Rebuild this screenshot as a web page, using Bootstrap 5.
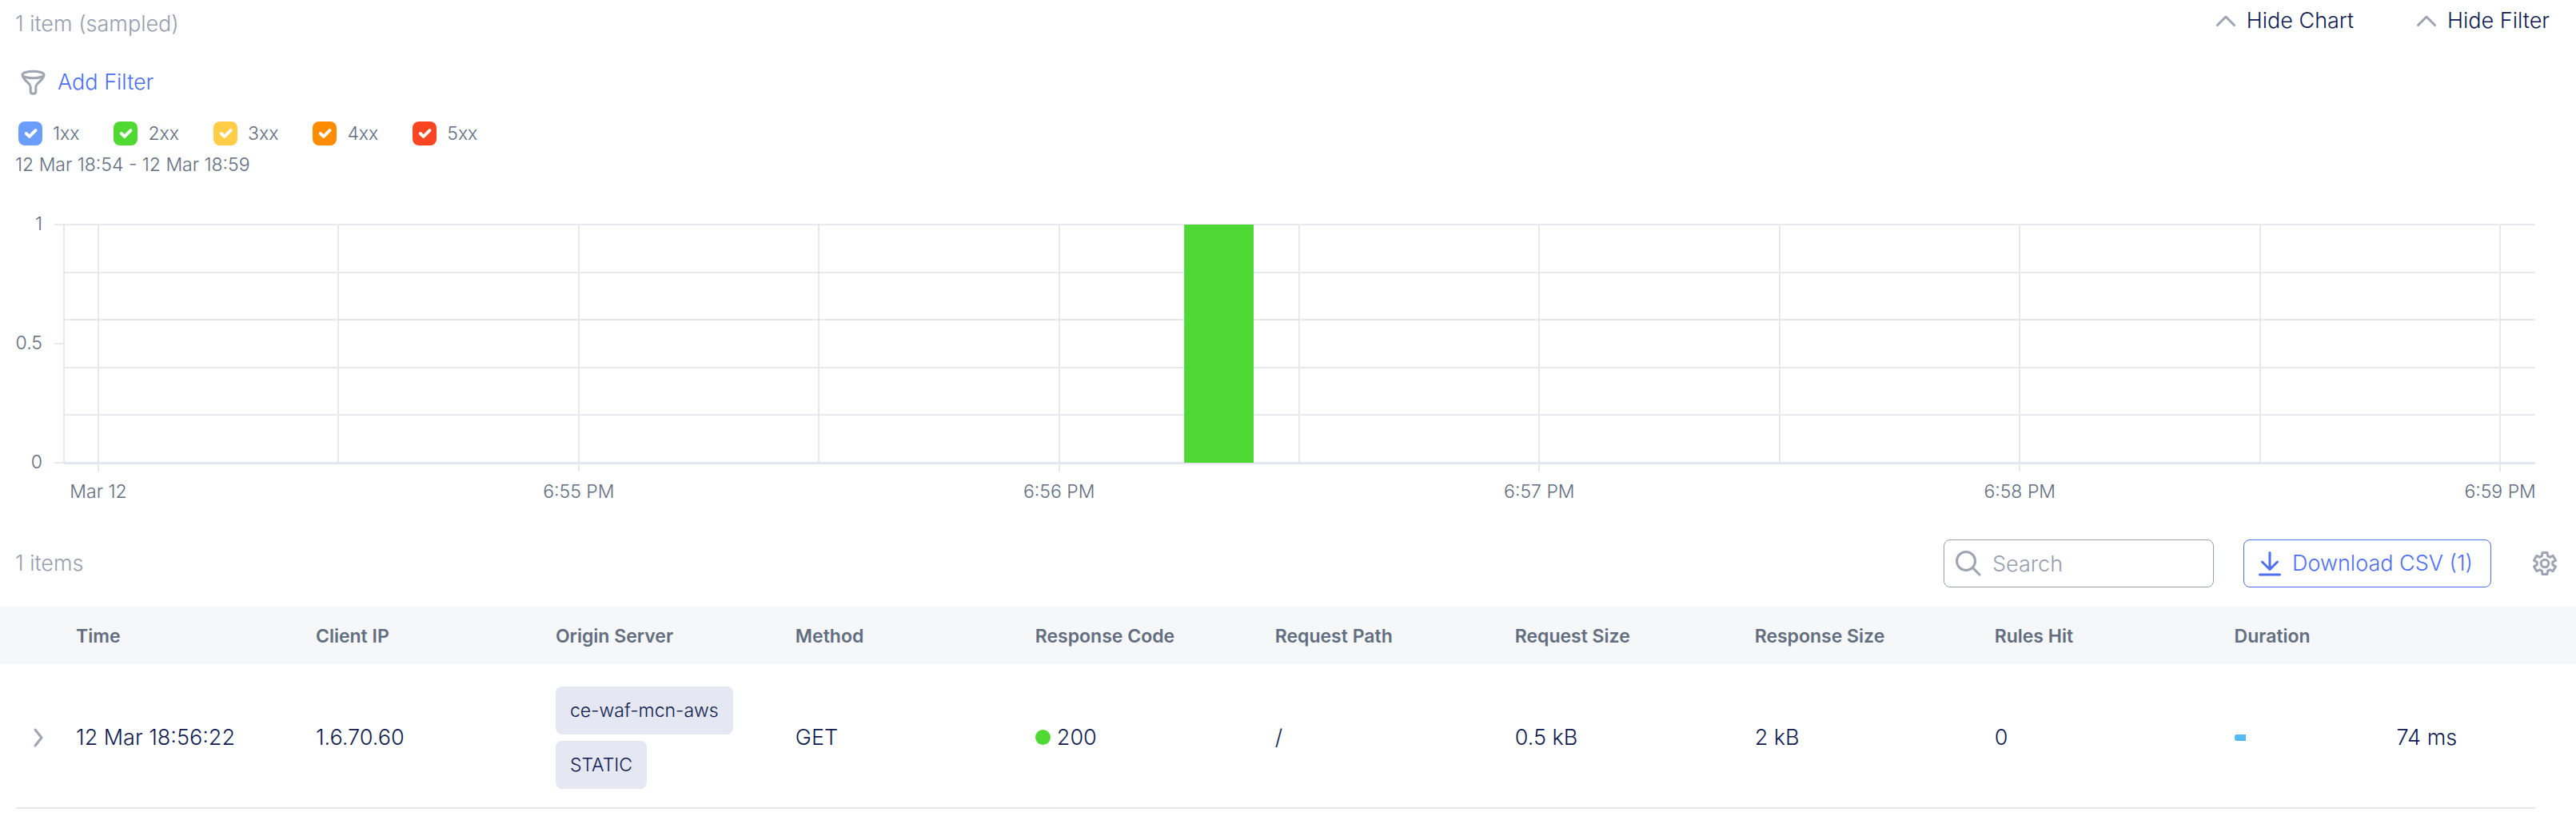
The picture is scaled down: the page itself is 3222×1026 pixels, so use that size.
<!DOCTYPE html>
<html lang="en">
<head>
<meta charset="utf-8">
<meta name="viewport" content="width=device-width, initial-scale=1">
<title>Requests</title>
<link href="https://cdn.jsdelivr.net/npm/bootstrap@5.3.0/dist/css/bootstrap.min.css" rel="stylesheet">
<script src="https://cdn.jsdelivr.net/npm/bootstrap@5.3.0/dist/js/bootstrap.bundle.min.js" defer></script>
<style>
  :root { --ink: #0f1a50; --slate: #626d7f; --mist: #989daf; --brand: #4f6ff2; --line: #e6e7ed; }
  body { font-family: Inter, "Liberation Sans", sans-serif; font-size: 27px; font-weight: 300; color: var(--ink); background: #fff; }
  .btn { --bs-btn-font-size: 27px; --bs-btn-font-weight: 300; --bs-btn-line-height: 40px; }
  .page-head { padding: 10px 33px 0 19px; }
  .count-label { color: var(--mist); line-height: 40px; }
  .toggles { gap: 78px; }
  .toggle-link { --bs-btn-line-height: 32px; --bs-btn-color: var(--ink); gap: 13px; }
  .filter-bar { padding: 33px 20px 0 24px; }
  .add-filter { --bs-btn-color: var(--brand); gap: 14px; }
  .legend-row { padding: 29px 20px 0 23px; gap: 43px; font-size: 23px; color: var(--slate); }
  .legend-item { gap: 13px; line-height: 28px; }
  .legend-item .form-check-input { width: 30px; height: 30px; margin: 0; border: 0; border-radius: 8px; background-size: 26px; background-color: var(--tone); }
  .c1 { --tone: #6b9dff; } .c2 { --tone: #4fd932; } .c3 { --tone: #ffcd47; } .c4 { --tone: #ff8c00; } .c5 { --tone: #fb4522; }
  .range-label { padding: 8px 19px 0; font-size: 23px; line-height: 32px; color: var(--slate); }
  .plot-area { padding: 0 51px 0 80px; }
  .plot-area svg { display: block; width: 100%; height: 409px; overflow: visible; font-size: 23px; }
  .plot-area line { stroke: #e8e9ee; stroke-width: 2; shape-rendering: crispEdges; }
  .plot-area .base-axis { stroke: #e4e5ef; stroke-width: 3; }
  .plot-area text { fill: var(--slate); }
  .toolbar-row { padding: 44px 22px 24px 19px; }
  .search-box { width: 338px; margin-right: 37px; }
  .search-box svg { left: 15px; top: 14px; }
  .search-box .form-control { height: 60px; padding: 0 16px 0 60px; font-size: 27px; font-weight: 300; color: var(--ink); border: 1px solid #989daf; border-radius: 8px; }
  .search-box .form-control::placeholder { color: var(--mist); }
  .csv-btn { --bs-btn-color: var(--brand); --bs-btn-border-color: var(--brand); --bs-btn-border-radius: 8px; padding: 9px 22px 9px 17px; gap: 13px; margin-right: 50px; }
  .log-table { --bs-table-bg: transparent; --bs-table-color: var(--ink); table-layout: fixed; line-height: 40px; }
  .log-table > :not(caption) > * > * { border: 0; padding: 2px 0 0; vertical-align: middle; }
  .log-table thead { background: #f5f7f9; }
  .log-table thead th { height: 72px; font-size: 23px; font-weight: 600; color: var(--slate); }
  .log-table tbody tr { background: linear-gradient(var(--line), var(--line)) 20px 100% / calc(100% - 71px) 2px no-repeat; }
  .log-table tbody td { height: 181px; }
  .col-toggle { width: 95px; }
  .col-data { width: 9.31%; }
  .origin-tag { background: #e5e7f2; border-radius: 8px; padding: 14px 18px; font-size: 23px; line-height: 32px; }
  .status-dot { width: 19px; height: 19px; border-radius: 50%; background: #4fd932; }
  .time-track { width: 203px; height: 8px; }
  .time-fill { height: 8px; background: #55b9f3; border-radius: 3px 0 0 3px; }
</style>
</head>
<body>
<header class="page-head d-flex justify-content-between align-items-start">
  <span class="count-label">1 item (sampled)</span>
  <div class="toggles d-flex">
    <button type="button" class="btn toggle-link d-flex align-items-center border-0 p-0">
      <svg width="26" height="16" viewBox="0 0 26 16" fill="none" stroke="#9fa4b3" stroke-width="3" stroke-linecap="round" stroke-linejoin="round"><path d="M2.500 13.500 13 3l10.500 10.500"/></svg>Hide Chart</button>
    <button type="button" class="btn toggle-link d-flex align-items-center border-0 p-0">
      <svg width="26" height="16" viewBox="0 0 26 16" fill="none" stroke="#9fa4b3" stroke-width="3" stroke-linecap="round" stroke-linejoin="round"><path d="M2.500 13.500 13 3l10.500 10.500"/></svg>Hide Filter</button>
  </div>
</header>

<main>
  <div class="filter-bar d-flex">
    <button type="button" class="btn add-filter d-flex align-items-center border-0 p-0">
      <svg width="34" height="34" viewBox="0 0 34 34" fill="none" stroke="#9fa4b3" stroke-width="3" stroke-linejoin="round"><ellipse cx="17.500" cy="7.500" rx="13.500" ry="4.200"/><path d="M4 8c.2 2.600 1.400 4 3 5.600l5.600 5.600c1.100 1.100 1.600 2.100 1.600 3.800v5.500c0 1.800 1.300 2.700 3.300 2.700s3.300-.9 3.300-2.700V23c0-1.700.5-2.700 1.600-3.800l5.600-5.600c1.600-1.600 2.800-3 3-5.600"/></svg>Add Filter</button>
  </div>

  <div class="legend-row d-flex">
    <label class="legend-item d-flex align-items-center"><input class="form-check-input c1" type="checkbox" checked>1xx</label>
    <label class="legend-item d-flex align-items-center"><input class="form-check-input c2" type="checkbox" checked>2xx</label>
    <label class="legend-item d-flex align-items-center"><input class="form-check-input c3" type="checkbox" checked>3xx</label>
    <label class="legend-item d-flex align-items-center"><input class="form-check-input c4" type="checkbox" checked>4xx</label>
    <label class="legend-item d-flex align-items-center"><input class="form-check-input c5" type="checkbox" checked>5xx</label>
  </div>
  <div class="range-label">12 Mar 18:54 - 12 Mar 18:59</div>

  <div class="plot-area">
    <svg role="img" aria-label="Requests by response code">
      <g>
        <line x1="-12" x2="100%" y1="59" y2="59"/><line x1="0" x2="100%" y1="119" y2="119"/><line x1="0" x2="100%" y1="178" y2="178"/><line x1="0" x2="100%" y1="238" y2="238"/><line x1="0" x2="100%" y1="297" y2="297"/>
        <line x1="-12" x2="0" y1="208" y2="208"/><line x1="-12" x2="0" y1="357" y2="357"/>
        <line x1="0" x2="0" y1="59" y2="357"/>
        <line x1="1.39%" x2="1.39%" y1="59" y2="368"/><line x1="11.11%" x2="11.11%" y1="59" y2="357"/>
        <line x1="20.83%" x2="20.83%" y1="59" y2="368"/><line x1="30.55%" x2="30.55%" y1="59" y2="357"/>
        <line x1="40.27%" x2="40.27%" y1="59" y2="368"/><line x1="49.98%" x2="49.98%" y1="59" y2="357"/>
        <line x1="59.70%" x2="59.70%" y1="59" y2="368"/><line x1="69.42%" x2="69.42%" y1="59" y2="357"/>
        <line x1="79.14%" x2="79.14%" y1="59" y2="368"/><line x1="88.86%" x2="88.86%" y1="59" y2="357"/>
        <line x1="98.58%" x2="98.58%" y1="59" y2="368"/>
      </g>
      <line class="base-axis" x1="0" x2="100%" y1="357" y2="357"/>
      <rect x="45.33%" y="59" width="2.81%" height="298" fill="#4fd935"/>
      <g text-anchor="end"><text x="-27" y="66">1</text><text x="-27" y="215">0.5</text><text x="-27" y="364">0</text></g>
      <g text-anchor="middle">
        <text x="1.39%" y="401">Mar 12</text><text x="20.83%" y="401">6:55 PM</text><text x="40.27%" y="401">6:56 PM</text><text x="59.70%" y="401">6:57 PM</text><text x="79.14%" y="401">6:58 PM</text><text x="98.58%" y="401">6:59 PM</text>
      </g>
    </svg>
  </div>

  <div class="toolbar-row d-flex align-items-center">
    <span class="count-label me-auto">1 items</span>
    <div class="search-box position-relative">
      <svg class="position-absolute" width="32" height="32" viewBox="0 0 32 32" fill="none" stroke="#9fa4b3" stroke-width="3" stroke-linecap="round"><circle cx="13" cy="13" r="11.500"/><path d="m21.500 21.500 8.500 8.500"/></svg>
      <input type="search" class="form-control" placeholder="Search" aria-label="Search">
    </div>
    <button type="button" class="btn csv-btn d-flex align-items-center">
      <svg width="30" height="32" viewBox="0 0 30 32" fill="none" stroke="#4f6ff2" stroke-width="3" stroke-linecap="round" stroke-linejoin="round"><path d="M15 2.500V23M5.500 14l9.500 9.500 9.500-9.500M2.500 30h25"/></svg>Download CSV (1)</button>
    <button type="button" class="btn border-0 p-0 d-flex" aria-label="Table settings">
      <svg width="34" height="34" viewBox="0 0 34 34" fill="none" stroke="#9fa4b3" stroke-width="3" stroke-linejoin="round"><circle cx="17" cy="17" r="4.800"/><path d="M14 3.400h6l.6 4.200 2.800 1.700 3.700-2 3.400 5.800-3.700 2.200v3.400l3.700 2.200-3.400 5.800-3.700-2-2.800 1.700-.6 4.200h-6l-.6-4.200-2.800-1.700-3.700 2-3.400-5.800 3.700-2.200v-3.400l-3.700-2.200 3.400-5.800 3.700 2 2.800-1.700z"/></svg></button>
  </div>

  <table class="table log-table mb-0">
    <colgroup><col class="col-toggle"><col class="col-data"><col class="col-data"><col class="col-data"><col class="col-data"><col class="col-data"><col class="col-data"><col class="col-data"><col class="col-data"><col class="col-data"><col></colgroup>
    <thead>
      <tr><th></th><th scope="col">Time</th><th scope="col">Client IP</th><th scope="col">Origin Server</th><th scope="col">Method</th><th scope="col">Response Code</th><th scope="col">Request Path</th><th scope="col">Request Size</th><th scope="col">Response Size</th><th scope="col">Rules Hit</th><th scope="col">Duration</th></tr>
    </thead>
    <tbody>
      <tr>
        <td><button type="button" class="btn border-0 p-0 d-block mx-auto" aria-label="Expand row"><svg class="d-block" width="14" height="26" viewBox="0 0 14 26" fill="none" stroke="#9fa4b3" stroke-width="3" stroke-linecap="round" stroke-linejoin="round"><path d="m3 3 8 10-8 10"/></svg></button></td>
        <td>12 Mar 18:56:22</td>
        <td>1.6.70.60</td>
        <td><div class="d-flex flex-column align-items-start gap-2"><span class="origin-tag">ce-waf-mcn-aws</span><span class="origin-tag">STATIC</span></div></td>
        <td>GET</td>
        <td><div class="d-flex align-items-center gap-2"><span class="status-dot"></span>200</div></td>
        <td>/</td>
        <td>0.5 kB</td>
        <td>2 kB</td>
        <td>0</td>
        <td><div class="d-flex align-items-center"><div class="time-track"><div class="time-fill" style="width:7%"></div></div>74 ms</div></td>
      </tr>
    </tbody>
  </table>
</main>
</body>
</html>
